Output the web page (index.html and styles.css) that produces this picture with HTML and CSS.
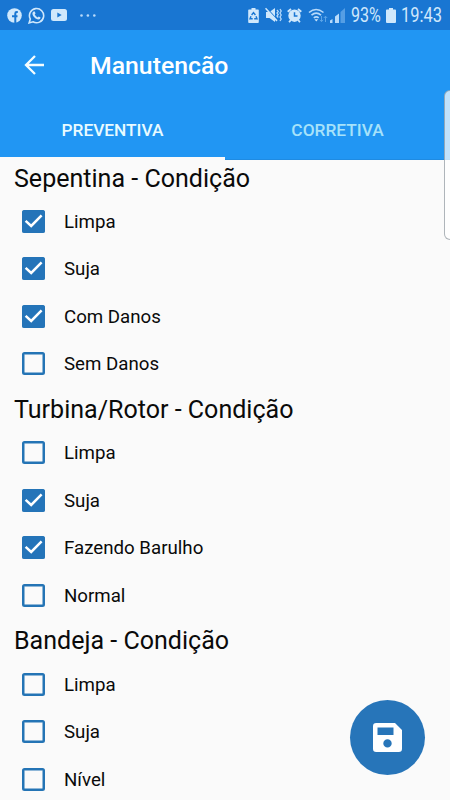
FILE: index.html
```html
<!DOCTYPE html>
<html lang="pt-BR">
<head>
<meta charset="utf-8">
<title>Manutencão</title>
<link rel="stylesheet" href="styles.css">
</head>
<body>
<svg class="defs" width="0" height="0">
  <symbol id="check" viewBox="0 0 23 23"><path d="M3.6 10.8 9.2 16 19.6 5.4" fill="none" stroke="#fff" stroke-width="2.5"/></symbol>
</svg>
<div class="status">
  <div class="group">
    <svg class="fb" width="15" height="15" viewBox="0 0 15 15"><circle cx="7.5" cy="7.5" r="7.3" fill="#d0e8fc"/><path d="M10.8 4.1H9.7Q8.3 4.1 8.3 5.5V15M5 8.3H10.5" fill="none" stroke="#1976d2" stroke-width="2"/></svg>
    <svg class="wa" width="17" height="17" viewBox="0 0 17 17"><path d="M1.1 15.9 2.3 12A7.1 7.1 0 1 1 5 14.8Z" fill="none" stroke="#d0e8fc" stroke-width="1.6"/><path d="M5.7 4.5 6.8 4.6 7.5 6.5 6.7 7.6Q7.8 9.7 9.7 10.5L10.7 9.5 12.6 10.5Q12.5 12.5 10.4 12.5C7.5 12.2 4.5 9 4.4 6.5Q4.5 5.2 5.7 4.5Z" fill="#d0e8fc"/></svg>
    <svg class="yt" width="16" height="12" viewBox="0 0 16 12"><rect width="16" height="12" rx="2.5" fill="#d0e8fc"/><path d="M6.3 3.4 10.7 6 6.3 8.6Z" fill="#1976d2"/></svg>
    <svg class="more" width="16" height="3" viewBox="0 0 16 3" fill="#b8dafa"><circle cx="1.5" cy="1.5" r="1.3"/><circle cx="7.9" cy="1.5" r="1.3"/><circle cx="14.3" cy="1.5" r="1.3"/></svg>
  </div>
  <div class="group">
    <svg class="saver" width="11" height="15" viewBox="0 0 11 15"><path d="M3.5 0H7.5V1.5H10Q10.8 1.5 10.8 2.3V14Q10.8 15 10 15H1Q.2 15 .2 14V2.3Q.2 1.5 1 1.5H3.5Z" fill="#d0e8fc"/><path d="M3.6 7 5.5 4.6 7.4 7M8 8.2 9 10.8H6.2M4.7 10.8H2L3 8.2" fill="none" stroke="#1976d2" stroke-width="1.4"/></svg>
    <svg class="mute" width="17" height="16" viewBox="0 0 17 16"><path d="M1 5H4.5L10 1V15L4.5 11H1Z" fill="#d0e8fc"/><path d="M1 .3 12.4 12.8" stroke="#1976d2" stroke-width="1.2"/><path d="M.5 1.2 12 13.9" stroke="#d0e8fc" stroke-width="1.6"/><path d="M12 3 13.2 4.5 12 6 13.2 7.5 12 9 13.2 10.5M15 2 16.2 4 15 6 16.2 8 15 10 16.2 12 15 14" fill="none" stroke="#b8dafa" stroke-width="1.3"/></svg>
    <svg class="alarm" width="15" height="15" viewBox="0 0 15 15"><path d="M.7 3.8 4 1M14.3 3.8 11 1M3.8 12 2.1 14.2M11.2 12 12.9 14.2" stroke="#d0e8fc" stroke-width="1.8"/><circle cx="7.5" cy="7.7" r="6.2" fill="#d0e8fc"/><path d="M7.5 4.3V8H10.5" fill="none" stroke="#1976d2" stroke-width="1.5"/></svg>
    <svg class="wifi" width="20" height="15" viewBox="0 0 20 15"><path d="M1 4.5Q8 -1.5 15.5 4.5M3.5 7.2Q8.2 3.2 13 7.2M5.8 9.8Q8.3 7.8 10.7 9.8" fill="none" stroke="#b8dafa" stroke-width="1.6"/><path d="M6.4 11.3H10.2L8.3 13.5Z" fill="#d0e8fc"/><path d="M13.5 8V13.5M11.8 11.8 13.5 13.7 15.2 11.8M17.5 14V8.3M15.8 10 17.5 8.2 19.2 10" fill="none" stroke="#5ba4e8" stroke-width="1"/></svg>
    <svg class="signal" width="15" height="15" viewBox="0 0 15 15"><path d="M0 15V12.5L2.5 11V15ZM5 15V8.5L9 5.5V15Z" fill="#b8dafa"/><path d="M10.5 15V4L15 0V15Z" fill="#559ee4"/></svg>
    <span class="pct">93%</span>
    <svg class="batt" width="10" height="15" viewBox="0 0 10 15"><path d="M3 0H7V1.5H9.2Q10 1.5 10 2.5V14Q10 15 9 15H1Q0 15 0 14V2.5Q0 1.5 .8 1.5H3Z" fill="#d0e8fc"/></svg>
    <span class="clock">19:43</span>
  </div>
</div>
<header class="appbar">
  <div class="toolbar">
    <svg class="back" width="22" height="22" viewBox="0 0 22 22"><path d="M21 11H3.2M12 2 3 11 12 20" fill="none" stroke="#f4fdff" stroke-width="2.3"/></svg>
    <h1>Manutencão</h1>
  </div>
  <nav class="tabs">
    <div class="tab active"><span>PREVENTIVA</span></div>
    <div class="tab"><span>CORRETIVA</span></div>
  </nav>
</header>
<main>
  <section>
    <h2>Sepentina - Condição</h2>
    <div class="row"><span class="box on"><svg><use href="#check"/></svg></span><span class="label">Limpa</span></div>
    <div class="row"><span class="box on"><svg><use href="#check"/></svg></span><span class="label">Suja</span></div>
    <div class="row"><span class="box on"><svg><use href="#check"/></svg></span><span class="label">Com Danos</span></div>
    <div class="row"><span class="box"></span><span class="label">Sem Danos</span></div>
  </section>
  <section>
    <h2>Turbina/Rotor - Condição</h2>
    <div class="row"><span class="box"></span><span class="label">Limpa</span></div>
    <div class="row"><span class="box on"><svg><use href="#check"/></svg></span><span class="label">Suja</span></div>
    <div class="row"><span class="box on"><svg><use href="#check"/></svg></span><span class="label">Fazendo Barulho</span></div>
    <div class="row"><span class="box"></span><span class="label">Normal</span></div>
  </section>
  <section>
    <h2>Bandeja - Condição</h2>
    <div class="row"><span class="box"></span><span class="label">Limpa</span></div>
    <div class="row"><span class="box"></span><span class="label">Suja</span></div>
    <div class="row"><span class="box"></span><span class="label">Nível</span></div>
  </section>
</main>
<div class="edge"></div>
<div class="fab"><svg width="29" height="29" viewBox="0 0 29 29"><path fill-rule="evenodd" d="M3.2 0H22L29 7V25.8Q29 29 25.8 29H3.2Q0 29 0 25.8V3.2Q0 0 3.2 0ZM4.5 4.5V12H20.5V4.5ZM14.5 16.2A4.2 4.2 0 1 0 14.5 24.6 4.2 4.2 0 1 0 14.5 16.2Z" fill="#fff"/></svg></div>
</body>
</html>
```
FILE: styles.css
```css
* { box-sizing: border-box; }
body {
  margin: 0;
  width: 450px;
  height: 800px;
  overflow: hidden;
  position: relative;
  background: #fafafa;
  color: #0a0a0a;
  font-family: Roboto, sans-serif;
}
svg { display: block; flex: none; }
.defs { position: absolute; }
.status {
  height: 30px;
  background: #1976d2;
  display: flex;
  justify-content: space-between;
  padding: 0 9px 0 7px;
  color: #d0e8fc;
  font-size: 19.6px;
  line-height: 30px;
}
.group { display: flex; align-items: center; }
.wa { margin-left: 6px; }
.yt { margin-left: 6px; }
.more { margin-left: 13px; }
.mute { margin-left: 6px; }
.alarm { margin-left: 5px; }
.wifi { margin-left: 6px; }
.signal { margin-left: 2px; }
.pct, .clock { white-space: nowrap; transform-origin: 0 50%; transform: scaleX(.82); padding-top: 1px; }
.pct { width: 30px; margin-left: 6px; }
.batt { margin-left: 5px; }
.clock { width: 40px; margin-left: 5px; transform: scaleX(.84); }
.appbar { height: 130px; background: #2196f3; color: #fff; }
.toolbar { height: 70px; display: flex; align-items: center; padding-left: 23px; }
h1 { margin: 2px 0 0 45px; font-size: 24.8px; font-weight: 500; line-height: 32px; }
.tabs { display: flex; height: 60px; }
.tab {
  flex: 1;
  display: flex;
  align-items: center;
  justify-content: center;
  font-size: 17.3px;
  font-weight: 500;
  color: #a6e2fa;
  border-bottom: 1px solid #1f8be2;
}
.tab.active { color: #e8fbff; border-bottom: 3px solid #fafafa; padding-top: 2px; }
main { margin-top: -3.6px; }
h2 {
  margin: 0;
  height: 41.3px;
  padding: 5.2px 0 0 14px;
  font-size: 25.05px;
  line-height: 34px;
  font-weight: 400;
}
.row {
  display: flex;
  align-items: center;
  height: 47.5px;
  padding-left: 22px;
  font-size: 18.7px;
}
.label { padding-top: 1px; }
.box {
  width: 23px;
  height: 23px;
  margin-right: 19px;
  border: 2px solid #2474b5;
  box-shadow: inset 0 0 0 .5px #2474b5;
  border-radius: 2.5px;
  flex: none;
}
.box.on { background: #2474b9; border: 0; }
.box svg { width: 23px; height: 23px; }
.edge {
  position: absolute;
  left: 444px;
  top: 90px;
  width: 12px;
  height: 150px;
  border: 1px solid rgba(110, 120, 130, .55);
  border-radius: 7px;
  background: rgba(255, 255, 255, .72);
}
.fab {
  position: absolute;
  left: 350px;
  top: 700px;
  width: 75px;
  height: 75px;
  border-radius: 50%;
  background: #2775b9;
  display: flex;
  align-items: center;
  justify-content: center;
}
```
